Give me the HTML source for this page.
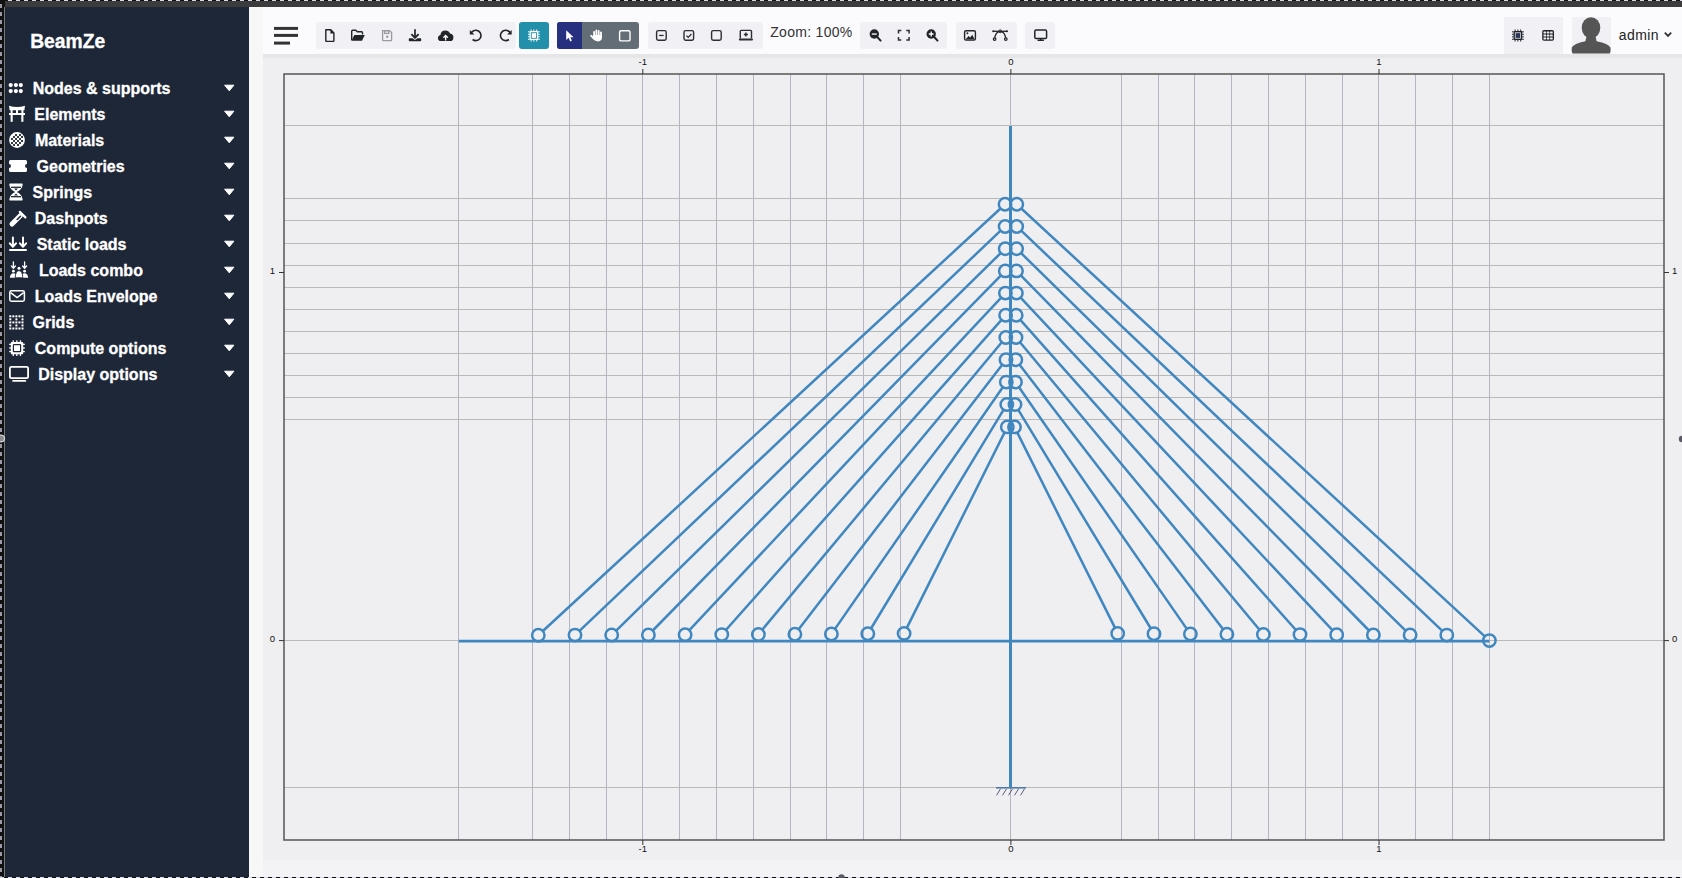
<!DOCTYPE html>
<html><head><meta charset="utf-8"><title>BeamZe</title>
<style>
html,body{margin:0;padding:0;width:1682px;height:878px;overflow:hidden;background:#f4f4f7;font-family:"Liberation Sans",sans-serif;}
.a{position:absolute;}
#topbar{left:0;top:0;width:1682px;height:7px;background:#3c3c3c;}
#topchk{left:0;top:0;width:1682px;height:1px;background:repeating-linear-gradient(90deg,#d8d8e8 0 4px,#111 4px 8px);}
#leftedge{left:0;top:0;width:5px;height:878px;background:#111;}
#leftchk{left:0;top:0;width:2px;height:878px;background:repeating-linear-gradient(180deg,#111 0 4px,#9a9aa8 4px 8px);}
#leftline{left:4px;top:7px;width:1px;height:871px;background:#777;}
#side{left:5px;top:7px;width:244px;height:871px;background:#1e2737;}
#strip{left:249px;top:7px;width:14px;height:871px;background:#f7f7f7;}
#tool{left:263px;top:7px;width:1419px;height:47px;background:#fbfbfd;}
#canvas{left:263px;top:54px;width:1419px;height:806px;background:#efeff2;}
#canvastop{left:263px;top:54px;width:1419px;height:4px;background:#e6e6e6;}
#bottom{left:263px;top:860px;width:1419px;height:17px;background:#f3f3f6;}
#botchk{left:0;top:877px;width:1682px;height:1px;background:repeating-linear-gradient(90deg,#d8d8e8 0 4px,#111 4px 8px);}
.grp{background:#f0f0f5;}
svg{position:absolute;left:0;top:0;}
</style></head>
<body>
<div class="a" id="topbar"></div>
<div class="a" id="topchk"></div>
<div class="a" id="leftedge"></div>
<div class="a" id="leftchk"></div>
<div class="a" id="leftline"></div>
<div class="a" id="side"></div>
<div class="a" id="strip"></div>
<div class="a" id="tool"></div>
<div class="a" id="canvas"></div>
<div class="a" id="canvastop"></div>
<div class="a" id="bottom"></div>
<div class="a" id="botchk"></div>
<!-- toolbar groups -->
<div class="a grp" style="left:316px;top:22px;width:200px;height:27px;border-radius:3px"></div>
<div class="a" style="left:519px;top:22px;width:30px;height:27px;border-radius:3px;background:#2290aa"></div>
<div class="a" style="left:557px;top:22px;width:82px;height:27px;border-radius:3px;background:#636d76;overflow:hidden"><div style="width:25px;height:27px;background:#26307f"></div></div>
<div class="a grp" style="left:648px;top:22px;width:115px;height:27px;border-radius:3px"></div>
<div class="a grp" style="left:860px;top:22px;width:87px;height:27px;border-radius:3px"></div>
<div class="a grp" style="left:956px;top:22px;width:61px;height:27px;border-radius:3px"></div>
<div class="a grp" style="left:1025px;top:22px;width:30px;height:27px;border-radius:3px"></div>
<div class="a grp" style="left:1504px;top:17px;width:59px;height:37px;"></div>
<div class="a grp" style="left:1572px;top:17px;width:39px;height:37px;"></div>

<svg width="1682" height="878" viewBox="0 0 1682 878">
<line x1="458.5" y1="74" x2="458.5" y2="840" stroke="#b4b4c4" stroke-width="1"/>
<line x1="532.5" y1="74" x2="532.5" y2="840" stroke="#b4b4c4" stroke-width="1"/>
<line x1="569.5" y1="74" x2="569.5" y2="840" stroke="#b4b4c4" stroke-width="1"/>
<line x1="606.5" y1="74" x2="606.5" y2="840" stroke="#b4b4c4" stroke-width="1"/>
<line x1="642.5" y1="74" x2="642.5" y2="840" stroke="#b4b4c4" stroke-width="1"/>
<line x1="679.5" y1="74" x2="679.5" y2="840" stroke="#b4b4c4" stroke-width="1"/>
<line x1="716.5" y1="74" x2="716.5" y2="840" stroke="#b4b4c4" stroke-width="1"/>
<line x1="753.5" y1="74" x2="753.5" y2="840" stroke="#b4b4c4" stroke-width="1"/>
<line x1="790.5" y1="74" x2="790.5" y2="840" stroke="#b4b4c4" stroke-width="1"/>
<line x1="826.5" y1="74" x2="826.5" y2="840" stroke="#b4b4c4" stroke-width="1"/>
<line x1="863.5" y1="74" x2="863.5" y2="840" stroke="#b4b4c4" stroke-width="1"/>
<line x1="900.5" y1="74" x2="900.5" y2="840" stroke="#b4b4c4" stroke-width="1"/>
<line x1="1010.5" y1="74" x2="1010.5" y2="840" stroke="#b4b4c4" stroke-width="1"/>
<line x1="1121.5" y1="74" x2="1121.5" y2="840" stroke="#b4b4c4" stroke-width="1"/>
<line x1="1158.5" y1="74" x2="1158.5" y2="840" stroke="#b4b4c4" stroke-width="1"/>
<line x1="1194.5" y1="74" x2="1194.5" y2="840" stroke="#b4b4c4" stroke-width="1"/>
<line x1="1231.5" y1="74" x2="1231.5" y2="840" stroke="#b4b4c4" stroke-width="1"/>
<line x1="1268.5" y1="74" x2="1268.5" y2="840" stroke="#b4b4c4" stroke-width="1"/>
<line x1="1305.5" y1="74" x2="1305.5" y2="840" stroke="#b4b4c4" stroke-width="1"/>
<line x1="1342.5" y1="74" x2="1342.5" y2="840" stroke="#b4b4c4" stroke-width="1"/>
<line x1="1378.5" y1="74" x2="1378.5" y2="840" stroke="#b4b4c4" stroke-width="1"/>
<line x1="1415.5" y1="74" x2="1415.5" y2="840" stroke="#b4b4c4" stroke-width="1"/>
<line x1="1452.5" y1="74" x2="1452.5" y2="840" stroke="#b4b4c4" stroke-width="1"/>
<line x1="1489.5" y1="74" x2="1489.5" y2="840" stroke="#b4b4c4" stroke-width="1"/>
<line x1="284" y1="125.5" x2="1664" y2="125.5" stroke="#b9b9b8" stroke-width="1"/>
<line x1="284" y1="198.5" x2="1664" y2="198.5" stroke="#b9b9b8" stroke-width="1"/>
<line x1="284" y1="220.5" x2="1664" y2="220.5" stroke="#b9b9b8" stroke-width="1"/>
<line x1="284" y1="243.5" x2="1664" y2="243.5" stroke="#b9b9b8" stroke-width="1"/>
<line x1="284" y1="265.5" x2="1664" y2="265.5" stroke="#b9b9b8" stroke-width="1"/>
<line x1="284" y1="287.5" x2="1664" y2="287.5" stroke="#b9b9b8" stroke-width="1"/>
<line x1="284" y1="309.5" x2="1664" y2="309.5" stroke="#b9b9b8" stroke-width="1"/>
<line x1="284" y1="331.5" x2="1664" y2="331.5" stroke="#b9b9b8" stroke-width="1"/>
<line x1="284" y1="353.5" x2="1664" y2="353.5" stroke="#b9b9b8" stroke-width="1"/>
<line x1="284" y1="375.5" x2="1664" y2="375.5" stroke="#b9b9b8" stroke-width="1"/>
<line x1="284" y1="397.5" x2="1664" y2="397.5" stroke="#b9b9b8" stroke-width="1"/>
<line x1="284" y1="419.5" x2="1664" y2="419.5" stroke="#b9b9b8" stroke-width="1"/>
<line x1="284" y1="640.5" x2="1664" y2="640.5" stroke="#b9b9b8" stroke-width="1"/>
<line x1="284" y1="787.5" x2="1664" y2="787.5" stroke="#b9b9b8" stroke-width="1"/>
<rect x="284" y="74" width="1380" height="766" fill="none" stroke="#555" stroke-width="1.5"/>
<line x1="642.8" y1="69" x2="642.8" y2="74" stroke="#333" stroke-width="1"/>
<line x1="642.8" y1="840" x2="642.8" y2="845" stroke="#333" stroke-width="1"/>
<line x1="1010.9" y1="69" x2="1010.9" y2="74" stroke="#333" stroke-width="1"/>
<line x1="1010.9" y1="840" x2="1010.9" y2="845" stroke="#333" stroke-width="1"/>
<line x1="1379.0" y1="69" x2="1379.0" y2="74" stroke="#333" stroke-width="1"/>
<line x1="1379.0" y1="840" x2="1379.0" y2="845" stroke="#333" stroke-width="1"/>
<line x1="279" y1="272.5" x2="284" y2="272.5" stroke="#333" stroke-width="1"/>
<line x1="1664" y1="272.5" x2="1669" y2="272.5" stroke="#333" stroke-width="1"/>
<line x1="279" y1="640.6" x2="284" y2="640.6" stroke="#333" stroke-width="1"/>
<line x1="1664" y1="640.6" x2="1669" y2="640.6" stroke="#333" stroke-width="1"/>
<g font-family="Liberation Sans, sans-serif" font-size="9.5" fill="#111"><text x="642.8" y="65" text-anchor="middle">-1</text><text x="642.8" y="852" text-anchor="middle">-1</text><text x="1010.9" y="65" text-anchor="middle">0</text><text x="1010.9" y="852" text-anchor="middle">0</text><text x="1379.0" y="65" text-anchor="middle">1</text><text x="1379.0" y="852" text-anchor="middle">1</text><text x="275" y="273.5" text-anchor="end">1</text><text x="1672" y="273.5" text-anchor="start">1</text><text x="275" y="641.6" text-anchor="end">0</text><text x="1672" y="641.6" text-anchor="start">0</text></g>
<line x1="458.8" y1="641.1" x2="1489.4" y2="641.1" stroke="#3f87be" stroke-width="2.8"/><line x1="1010.5" y1="126" x2="1010.5" y2="787.8" stroke="#3f87be" stroke-width="3"/><g stroke="#3f87be" stroke-width="2.5"><line x1="1000.5" y1="208.5" x2="542.9" y2="631.0"/><line x1="1021.3" y1="208.5" x2="1484.8" y2="636.4"/><line x1="1000.6" y1="230.7" x2="579.5" y2="630.8"/><line x1="1021.2" y1="230.7" x2="1442.3" y2="630.8"/><line x1="1000.8" y1="253.0" x2="616.2" y2="630.7"/><line x1="1021.0" y1="253.0" x2="1405.6" y2="630.7"/><line x1="1001.0" y1="275.3" x2="652.8" y2="630.5"/><line x1="1020.8" y1="275.3" x2="1369.0" y2="630.5"/><line x1="1001.2" y1="297.6" x2="689.4" y2="630.2"/><line x1="1020.6" y1="297.6" x2="1332.4" y2="630.2"/><line x1="1001.5" y1="319.9" x2="725.9" y2="630.0"/><line x1="1020.3" y1="319.9" x2="1295.9" y2="630.0"/><line x1="1001.8" y1="342.3" x2="762.3" y2="629.7"/><line x1="1020.0" y1="342.3" x2="1259.5" y2="629.7"/><line x1="1002.2" y1="364.7" x2="798.7" y2="629.3"/><line x1="1019.6" y1="364.7" x2="1223.1" y2="629.3"/><line x1="1002.8" y1="387.2" x2="835.0" y2="628.9"/><line x1="1019.0" y1="387.2" x2="1186.8" y2="628.9"/><line x1="1003.5" y1="409.8" x2="871.0" y2="628.5"/><line x1="1018.3" y1="409.8" x2="1150.8" y2="628.5"/><line x1="1004.6" y1="432.4" x2="906.8" y2="627.9"/><line x1="1017.2" y1="432.4" x2="1115.0" y2="627.9"/></g><g stroke="#3f87be" stroke-width="2.5" fill="none"><circle cx="1005.0" cy="204.3" r="6.2"/><circle cx="538.3" cy="635.2" r="6.2"/><circle cx="1016.8" cy="204.3" r="6.2"/><circle cx="1489.4" cy="640.6" r="6.2"/><circle cx="1005.1" cy="226.5" r="6.2"/><circle cx="575.0" cy="635.1" r="6.2"/><circle cx="1016.7" cy="226.5" r="6.2"/><circle cx="1446.8" cy="635.1" r="6.2"/><circle cx="1005.2" cy="248.7" r="6.2"/><circle cx="611.7" cy="635.0" r="6.2"/><circle cx="1016.6" cy="248.7" r="6.2"/><circle cx="1410.1" cy="635.0" r="6.2"/><circle cx="1005.3" cy="270.9" r="6.2"/><circle cx="648.4" cy="634.9" r="6.2"/><circle cx="1016.5" cy="270.9" r="6.2"/><circle cx="1373.4" cy="634.9" r="6.2"/><circle cx="1005.4" cy="293.1" r="6.2"/><circle cx="685.1" cy="634.8" r="6.2"/><circle cx="1016.4" cy="293.1" r="6.2"/><circle cx="1336.7" cy="634.8" r="6.2"/><circle cx="1005.6" cy="315.3" r="6.2"/><circle cx="721.8" cy="634.6" r="6.2"/><circle cx="1016.2" cy="315.3" r="6.2"/><circle cx="1300.0" cy="634.6" r="6.2"/><circle cx="1005.8" cy="337.5" r="6.2"/><circle cx="758.4" cy="634.5" r="6.2"/><circle cx="1016.0" cy="337.5" r="6.2"/><circle cx="1263.4" cy="634.5" r="6.2"/><circle cx="1006.0" cy="359.8" r="6.2"/><circle cx="794.9" cy="634.3" r="6.2"/><circle cx="1015.8" cy="359.8" r="6.2"/><circle cx="1226.9" cy="634.3" r="6.2"/><circle cx="1006.3" cy="382.1" r="6.2"/><circle cx="831.4" cy="634.0" r="6.2"/><circle cx="1015.5" cy="382.1" r="6.2"/><circle cx="1190.4" cy="634.0" r="6.2"/><circle cx="1006.8" cy="404.5" r="6.2"/><circle cx="867.8" cy="633.8" r="6.2"/><circle cx="1015.0" cy="404.5" r="6.2"/><circle cx="1154.0" cy="633.8" r="6.2"/><circle cx="1007.3" cy="426.9" r="6.2"/><circle cx="904.1" cy="633.4" r="6.2"/><circle cx="1014.5" cy="426.9" r="6.2"/><circle cx="1117.7" cy="633.4" r="6.2"/></g><line x1="996" y1="787.8" x2="1026" y2="787.8" stroke="#4f7aa8" stroke-width="1.6"/><line x1="1000.5" y1="788.84" x2="996.5" y2="795.34" stroke="#56607a" stroke-width="1"/><line x1="1006.5" y1="788.84" x2="1002.5" y2="795.34" stroke="#56607a" stroke-width="1"/><line x1="1012.5" y1="788.84" x2="1008.5" y2="795.34" stroke="#56607a" stroke-width="1"/><line x1="1018.5" y1="788.84" x2="1014.5" y2="795.34" stroke="#56607a" stroke-width="1"/><line x1="1024.5" y1="788.84" x2="1020.5" y2="795.34" stroke="#56607a" stroke-width="1"/>
<text x="30.2" y="47.9" font-family="Liberation Sans, sans-serif" font-weight="bold" font-size="19.3" fill="#fff" stroke="#fff" stroke-width="0.3">BeamZe</text>
<g font-family="Liberation Sans, sans-serif" font-weight="bold" font-size="16" fill="#fff" stroke="#fff" stroke-width="0.3"><text x="32.7" y="93.8">Nodes &amp; supports</text><text x="34.3" y="119.8">Elements</text><text x="34.9" y="145.8">Materials</text><text x="36.6" y="171.8">Geometries</text><text x="32.6" y="197.8">Springs</text><text x="34.8" y="223.8">Dashpots</text><text x="36.7" y="249.8">Static loads</text><text x="38.9" y="275.8">Loads combo</text><text x="34.8" y="301.8">Loads Envelope</text><text x="32.5" y="327.8">Grids</text><text x="34.8" y="353.8">Compute options</text><text x="38.2" y="379.8">Display options</text></g>
<g fill="#fff" stroke="#fff" stroke-width="1" stroke-linejoin="round"><path d="M224.6,85.2 H233.9 L229.25,90.8 Z"/><path d="M224.6,111.2 H233.9 L229.25,116.8 Z"/><path d="M224.6,137.2 H233.9 L229.25,142.8 Z"/><path d="M224.6,163.2 H233.9 L229.25,168.8 Z"/><path d="M224.6,189.2 H233.9 L229.25,194.8 Z"/><path d="M224.6,215.2 H233.9 L229.25,220.8 Z"/><path d="M224.6,241.2 H233.9 L229.25,246.8 Z"/><path d="M224.6,267.2 H233.9 L229.25,272.8 Z"/><path d="M224.6,293.2 H233.9 L229.25,298.8 Z"/><path d="M224.6,319.2 H233.9 L229.25,324.8 Z"/><path d="M224.6,345.2 H233.9 L229.25,350.8 Z"/><path d="M224.6,371.2 H233.9 L229.25,376.8 Z"/></g>
<g fill="#fff"><circle cx="10.7" cy="85.1" r="2.1"/><circle cx="10.7" cy="91.1" r="2.1"/><circle cx="15.9" cy="85.1" r="2.1"/><circle cx="15.9" cy="91.1" r="2.1"/><circle cx="20.8" cy="85.1" r="2.1"/><circle cx="20.8" cy="91.1" r="2.1"/><path d="M9,105.8 Q17,108.2 25,105.8 L24.4,110.2 H9.6 Z"/><rect x="10.6" y="110" width="2" height="3.2"/><rect x="16" y="110" width="2" height="3.2"/><rect x="21.4" y="110" width="2" height="3.2"/><rect x="9" y="113" width="16" height="2"/><rect x="10.6" y="115" width="2.1" height="6.8"/><rect x="21.3" y="115" width="2.1" height="6.8"/><circle cx="17" cy="140" r="7.9"/><g fill="#1e2737"><rect x="11.05" y="138.05" width="1.9" height="1.9"/><rect x="11.05" y="142.05" width="1.9" height="1.9"/><rect x="13.05" y="136.05" width="1.9" height="1.9"/><rect x="13.05" y="140.05" width="1.9" height="1.9"/><rect x="13.05" y="144.05" width="1.9" height="1.9"/><rect x="15.05" y="134.05" width="1.9" height="1.9"/><rect x="15.05" y="138.05" width="1.9" height="1.9"/><rect x="15.05" y="142.05" width="1.9" height="1.9"/><rect x="17.05" y="136.05" width="1.9" height="1.9"/><rect x="17.05" y="140.05" width="1.9" height="1.9"/><rect x="17.05" y="144.05" width="1.9" height="1.9"/><rect x="19.05" y="134.05" width="1.9" height="1.9"/><rect x="19.05" y="138.05" width="1.9" height="1.9"/><rect x="19.05" y="142.05" width="1.9" height="1.9"/><rect x="21.05" y="136.05" width="1.9" height="1.9"/><rect x="21.05" y="140.05" width="1.9" height="1.9"/></g><path d="M10.5,160 H25.5 Q27,160 27,161.5 V164 A2,2 0 0 0 27,168 V170.5 Q27,172 25.5,172 H10.5 Q9,172 9,170.5 V168 A2,2 0 0 0 9,164 V161.5 Q9,160 10.5,160 Z"/><path d="M9.3,184.2 Q9.3,183.6 10,183.6 H22 Q22.7,183.6 22.7,184.2 Q22.4,189.2 16.9,192 Q22.4,194.8 22.7,199.8 Q22.7,200.4 22,200.4 H10 Q9.3,200.4 9.3,199.8 Q9.6,194.8 15.1,192 Q9.6,189.2 9.3,184.2 Z"/><g stroke="#1e2737" stroke-width="1.3"><line x1="11" y1="187.3" x2="21" y2="187.3"/><line x1="11" y1="196.7" x2="21" y2="196.7"/></g><path d="M14,188.6 H18 L16,190.4 Z M14,195.4 H18 L16,193.6 Z" fill="#1e2737"/><g fill="none" stroke="#fff" stroke-linecap="round"><line x1="12" y1="224" x2="20.5" y2="215.5" stroke-width="5"/><line x1="19.8" y1="211.8" x2="25.4" y2="217.4" stroke-width="2.2"/></g><line x1="17.2" y1="219.5" x2="20.4" y2="216.3" stroke="#1e2737" stroke-width="1.6" stroke-linecap="round"/><g fill="none" stroke="#fff" stroke-width="2" stroke-linecap="round" stroke-linejoin="round"><path d="M12.9,237.5 V246.5 M9.8,243.3 L12.9,246.8 L16,243.3"/><path d="M23,237.5 V246.5 M19.9,243.3 L23,246.8 L26.1,243.3"/></g><rect x="9" y="249.1" width="18" height="1.9" rx="0.9"/><g fill="none" stroke="#fff" stroke-width="1.3" stroke-linecap="round" stroke-linejoin="round"><path d="M13.4,262 V268 M11.4,266 L13.4,268.2 L15.4,266"/><path d="M24.6,262 V268 M22.6,266 L24.6,268.2 L26.6,266"/></g><circle cx="13.4" cy="271.2" r="1.4"/><circle cx="19" cy="268.2" r="1.5"/><circle cx="24.6" cy="271.2" r="1.4"/><path d="M9.8,277.8 Q10.3,273.2 13.4,273.2 Q16.5,273.2 17,277.8 Z"/><path d="M21,277.8 Q21.5,273.2 24.6,273.2 Q27.7,273.2 28.2,277.8 Z"/><path d="M15.2,277.8 Q15.6,270.6 19,270.6 Q22.4,270.6 22.8,277.8 Z" stroke="#1e2737" stroke-width="0.9"/><g fill="none" stroke="#fff" stroke-width="1.5" stroke-linejoin="round"><rect x="9.8" y="290.8" width="14.6" height="10.4" rx="1.6"/><path d="M10.6,292.6 L17.1,297.6 L23.6,292.6"/></g><rect x="9.30" y="315.30" width="2" height="2"/><rect x="12.35" y="315.30" width="2" height="2"/><rect x="15.40" y="315.30" width="2" height="2"/><rect x="18.45" y="315.30" width="2" height="2"/><rect x="21.50" y="315.30" width="2" height="2"/><rect x="9.30" y="318.35" width="2" height="2"/><rect x="15.40" y="318.35" width="2" height="2"/><rect x="21.50" y="318.35" width="2" height="2"/><rect x="9.30" y="321.40" width="2" height="2"/><rect x="12.35" y="321.40" width="2" height="2"/><rect x="15.40" y="321.40" width="2" height="2"/><rect x="18.45" y="321.40" width="2" height="2"/><rect x="21.50" y="321.40" width="2" height="2"/><rect x="9.30" y="324.45" width="2" height="2"/><rect x="15.40" y="324.45" width="2" height="2"/><rect x="21.50" y="324.45" width="2" height="2"/><rect x="9.30" y="327.50" width="2" height="2"/><rect x="12.35" y="327.50" width="2" height="2"/><rect x="15.40" y="327.50" width="2" height="2"/><rect x="18.45" y="327.50" width="2" height="2"/><rect x="21.50" y="327.50" width="2" height="2"/><rect x="10.8" y="342" width="12.4" height="12.2" rx="1"/><rect x="9.2" y="343.7" width="2" height="1.3"/><rect x="22.8" y="343.7" width="2" height="1.3"/><rect x="12.6" y="340.3" width="1.3" height="2"/><rect x="12.6" y="354" width="1.3" height="2"/><rect x="9.2" y="347.3" width="2" height="1.3"/><rect x="22.8" y="347.3" width="2" height="1.3"/><rect x="16.2" y="340.3" width="1.3" height="2"/><rect x="16.2" y="354" width="1.3" height="2"/><rect x="9.2" y="350.9" width="2" height="1.3"/><rect x="22.8" y="350.9" width="2" height="1.3"/><rect x="19.8" y="340.3" width="1.3" height="2"/><rect x="19.8" y="354" width="1.3" height="2"/><rect x="13.4" y="344.6" width="7.2" height="7" rx="0.6" fill="#fff" stroke="#1e2737" stroke-width="1.2"/><rect x="9.9" y="366.9" width="18.2" height="11.3" rx="1.6" fill="none" stroke="#fff" stroke-width="1.8"/><rect x="12.2" y="380" width="14" height="1.8" rx="0.9"/></g>
<g fill="#333"><rect x="274" y="26.9" width="24" height="3"/><rect x="274" y="33.9" width="24" height="3"/><rect x="274" y="41.6" width="16" height="3"/></g>
<g fill="#212529"><path d="M325.8,29.8 H330.8 L333.9,32.9 V40.8 Q333.9,41.4 333.3,41.4 H326.4 Q325.8,41.4 325.8,40.8 Z" fill="none" stroke="#212529" stroke-width="1.4" stroke-linejoin="round"/><path d="M330.4,29.6 L334.2,33.4 H330.4 Z"/><path d="M351.7,40.2 V31.2 Q351.7,30.3 352.6,30.3 H355.8 L357.3,31.8 H361.6 Q362.5,31.8 362.5,32.7 V34.6" fill="none" stroke="#212529" stroke-width="1.4"/><path d="M351.5,40.7 L354.3,35 H364.8 L362,40.7 Z"/><g fill="none" stroke="#9a9aa0" stroke-width="1.3"><path d="M382.6,30.6 H389.6 L391.6,32.6 V40 Q391.6,40.7 390.9,40.7 H383.3 Q382.6,40.7 382.6,40 Z"/><rect x="384.6" y="30.8" width="4.2" height="2.6"/></g><circle cx="387.2" cy="36.8" r="1.2" fill="#9a9aa0"/><path d="M415,29.3 V37" stroke="#212529" stroke-width="1.7" fill="none"/><path d="M411.4,34.2 L415,37.8 L418.6,34.2" stroke="#212529" stroke-width="1.9" fill="none" stroke-linejoin="round"/><path d="M409.5,38.3 H412.5 L415,40 L417.5,38.3 H420.5 Q421.2,38.3 421.2,39 V40.6 Q421.2,41.3 420.5,41.3 H409.5 Q408.8,41.3 408.8,40.6 V39 Q408.8,38.3 409.5,38.3 Z"/><path d="M441.2,41 Q437.9,41 437.9,37.9 Q437.9,35.4 440.4,34.9 Q441,30.6 445.5,30.6 Q448.8,30.6 450,33.6 Q453.4,34 453.4,37.4 Q453.4,41 450,41 Z"/><path d="M445.6,40.6 V36 M443.4,37.8 L445.6,35.4 L447.8,37.8" stroke="#fbfbfd" stroke-width="1.3" fill="none"/><path d="M471.2,33 A5.2,5.2 0 1 1 472.6,39.5" fill="none" stroke="#212529" stroke-width="1.6"/><path d="M469.8,30 V34.6 H474.4 Z"/><path d="M510.3,33 A5.2,5.2 0 1 0 508.9,39.5" fill="none" stroke="#212529" stroke-width="1.6"/><path d="M511.7,30 V34.6 H507.1 Z"/></g>
<rect x="529.5" y="30.9" width="8.8" height="9.2" rx="1" fill="#fff"/><rect x="528.0" y="31.3" width="1.6" height="1" fill="#fff"/><rect x="538.2" y="31.3" width="1.6" height="1" fill="#fff"/><rect x="528.0" y="33.8" width="1.6" height="1" fill="#fff"/><rect x="538.2" y="33.8" width="1.6" height="1" fill="#fff"/><rect x="528.0" y="36.3" width="1.6" height="1" fill="#fff"/><rect x="538.2" y="36.3" width="1.6" height="1" fill="#fff"/><rect x="528.0" y="38.8" width="1.6" height="1" fill="#fff"/><rect x="538.2" y="38.8" width="1.6" height="1" fill="#fff"/><rect x="530.6" y="29.5" width="1" height="1.5" fill="#fff"/><rect x="530.6" y="40.0" width="1" height="1.5" fill="#fff"/><rect x="533.4" y="29.5" width="1" height="1.5" fill="#fff"/><rect x="533.4" y="40.0" width="1" height="1.5" fill="#fff"/><rect x="536.2" y="29.5" width="1" height="1.5" fill="#fff"/><rect x="536.2" y="40.0" width="1" height="1.5" fill="#fff"/><rect x="531.3" y="32.7" width="5.2" height="5.6" fill="#fff" stroke="#2290aa" stroke-width="0.9"/><path d="M566.2,30.2 V40 L568.6,37.8 L570.3,41.4 L571.9,40.6 L570.3,37.2 H573.6 Z" fill="#fff"/><g fill="#fff"><rect x="593.2" y="30.9" width="1.8" height="7" rx="0.9"/><rect x="595.5" y="29.6" width="1.8" height="8" rx="0.9"/><rect x="597.8" y="30.1" width="1.8" height="8" rx="0.9"/><rect x="600.1" y="31.4" width="1.8" height="7" rx="0.9"/><path d="M593.2,35 H601.9 V37.6 Q601.9,41.4 598,41.4 Q595,41.4 593.4,39.6 L590.4,36.2 Q589.8,35.4 590.6,34.9 Q591.4,34.5 592,35.2 L593.2,36.4 Z"/></g><rect x="619.6" y="30.7" width="10.4" height="10.2" rx="1.5" fill="none" stroke="#fff" stroke-width="1.4"/>
<rect x="656.6" y="30.6" width="9.6" height="9.6" rx="1.6" fill="none" stroke="#2b2f33" stroke-width="1.4"/><rect x="684.0" y="30.6" width="9.6" height="9.6" rx="1.6" fill="none" stroke="#2b2f33" stroke-width="1.4"/><rect x="711.6" y="30.6" width="9.6" height="9.6" rx="1.6" fill="none" stroke="#2b2f33" stroke-width="1.4"/><rect x="659.2" y="34.8" width="4.4" height="1.3" fill="#2b2f33"/><path d="M686.4,35.6 L688.2,37.4 L691.4,34" fill="none" stroke="#2b2f33" stroke-width="1.3"/><path d="M740.3,38.4 V31.3 Q740.3,30.4 741.2,30.4 H750.6 Q751.5,30.4 751.5,31.3 V38.4" fill="none" stroke="#2b2f33" stroke-width="1.4"/><rect x="738.8" y="38.6" width="14.2" height="2" rx="1" fill="#2b2f33"/><path d="M745.9,32.6 V36.6 M743.9,34.6 H747.9" stroke="#2b2f33" stroke-width="1.5"/><text x="770.2" y="37" font-family="Liberation Sans, sans-serif" font-size="14" letter-spacing="0.3" fill="#333">Zoom: 100%</text><circle cx="874.3" cy="34" r="4.7" fill="#212529"/><rect x="871.8" y="33.4" width="5" height="1.3" fill="#fff"/><path d="M877.3,37 L880.6,40.6" stroke="#212529" stroke-width="2" stroke-linecap="round"/><path d="M898.5,33.4 V30.5 H901.3 M906.3,30.5 H909.1 V33.4 M909.1,37 V39.9 H906.3 M901.3,39.9 H898.5 V37" fill="none" stroke="#2b2f33" stroke-width="1.5"/><circle cx="931.2" cy="34" r="4.7" fill="#212529"/><path d="M928.8,34 H933.6 M931.2,31.6 V36.4" stroke="#fff" stroke-width="1.3"/><path d="M934.2,37 L937.5,40.6" stroke="#212529" stroke-width="2" stroke-linecap="round"/><rect x="964.6" y="30.7" width="10.8" height="9.4" rx="1.4" fill="none" stroke="#212529" stroke-width="1.4"/><circle cx="967.4" cy="33.2" r="1" fill="#212529"/><path d="M965.5,39.6 L968.6,36 L970.2,37.6 L972.3,34.8 L974.6,39.6 Z" fill="#212529"/><path d="M994.6,38.2 Q996,31.4 1000.2,31.4 Q1004.4,31.4 1005.8,38.2" fill="none" stroke="#212529" stroke-width="1.3"/><path d="M993,31.3 H1007.2" stroke="#212529" stroke-width="1.3"/><circle cx="993.2" cy="31.3" r="1" fill="#212529"/><circle cx="1007" cy="31.3" r="1" fill="#212529"/><circle cx="1000.2" cy="31.3" r="1.4" fill="none" stroke="#212529" stroke-width="1"/><circle cx="994.6" cy="39.1" r="1.3" fill="none" stroke="#212529" stroke-width="1.2"/><circle cx="1005.8" cy="39.1" r="1.3" fill="none" stroke="#212529" stroke-width="1.2"/><rect x="1034.8" y="30.1" width="11.8" height="8.4" rx="1.3" fill="none" stroke="#212529" stroke-width="1.5"/><rect x="1040" y="38.5" width="1.4" height="1.6" fill="#212529"/><rect x="1037.4" y="39.6" width="6.6" height="1.3" rx="0.6" fill="#212529"/><rect x="1513.5" y="30.9" width="8.8" height="9.2" rx="1" fill="#212529"/><rect x="1512.0" y="31.3" width="1.6" height="1" fill="#212529"/><rect x="1522.2" y="31.3" width="1.6" height="1" fill="#212529"/><rect x="1512.0" y="33.8" width="1.6" height="1" fill="#212529"/><rect x="1522.2" y="33.8" width="1.6" height="1" fill="#212529"/><rect x="1512.0" y="36.3" width="1.6" height="1" fill="#212529"/><rect x="1522.2" y="36.3" width="1.6" height="1" fill="#212529"/><rect x="1512.0" y="38.8" width="1.6" height="1" fill="#212529"/><rect x="1522.2" y="38.8" width="1.6" height="1" fill="#212529"/><rect x="1514.6" y="29.5" width="1" height="1.5" fill="#212529"/><rect x="1514.6" y="40.0" width="1" height="1.5" fill="#212529"/><rect x="1517.4" y="29.5" width="1" height="1.5" fill="#212529"/><rect x="1517.4" y="40.0" width="1" height="1.5" fill="#212529"/><rect x="1520.2" y="29.5" width="1" height="1.5" fill="#212529"/><rect x="1520.2" y="40.0" width="1" height="1.5" fill="#212529"/><rect x="1515.3" y="32.7" width="5.2" height="5.6" fill="#2a3355" stroke="#c8c8d0" stroke-width="0.9"/><rect x="1542.2" y="30" width="11.8" height="10.8" rx="1.8" fill="#212529"/><rect x="1543.5" y="31.6" width="2.6" height="1.9" rx="0.3" fill="#f0f0f5"/><rect x="1546.8" y="31.6" width="2.6" height="1.9" rx="0.3" fill="#f0f0f5"/><rect x="1550.1" y="31.6" width="2.6" height="1.9" rx="0.3" fill="#f0f0f5"/><rect x="1543.5" y="34.6" width="2.6" height="1.9" rx="0.3" fill="#f0f0f5"/><rect x="1546.8" y="34.6" width="2.6" height="1.9" rx="0.3" fill="#f0f0f5"/><rect x="1550.1" y="34.6" width="2.6" height="1.9" rx="0.3" fill="#f0f0f5"/><rect x="1543.5" y="37.5" width="2.6" height="1.9" rx="0.3" fill="#f0f0f5"/><rect x="1546.8" y="37.5" width="2.6" height="1.9" rx="0.3" fill="#f0f0f5"/><rect x="1550.1" y="37.5" width="2.6" height="1.9" rx="0.3" fill="#f0f0f5"/><ellipse cx="1591" cy="27.8" rx="9.3" ry="10.6" fill="#555"/><path d="M1586.6,36 H1595.4 L1596.6,41.2 Q1608.6,43.4 1610.4,47.6 Q1611,52.4 1609.6,53.4 H1572.6 Q1571.4,52.4 1571.8,47.6 Q1573.6,43.4 1585.4,41.2 Z" fill="#555"/><text x="1618.8" y="39.6" font-family="Liberation Sans, sans-serif" font-size="14" letter-spacing="0.4" fill="#222">admin</text><path d="M1664.8,32.6 L1668,35.9 L1671.2,32.6" fill="none" stroke="#333" stroke-width="1.8"/>
<g fill="#5a5a66"><circle cx="1682" cy="439" r="3.2"/><circle cx="841.5" cy="877.5" r="3.2"/><circle cx="1" cy="438.5" r="3.6" fill="#8a8a90" stroke="#eee" stroke-width="1"/></g>
</svg>
</body></html>
